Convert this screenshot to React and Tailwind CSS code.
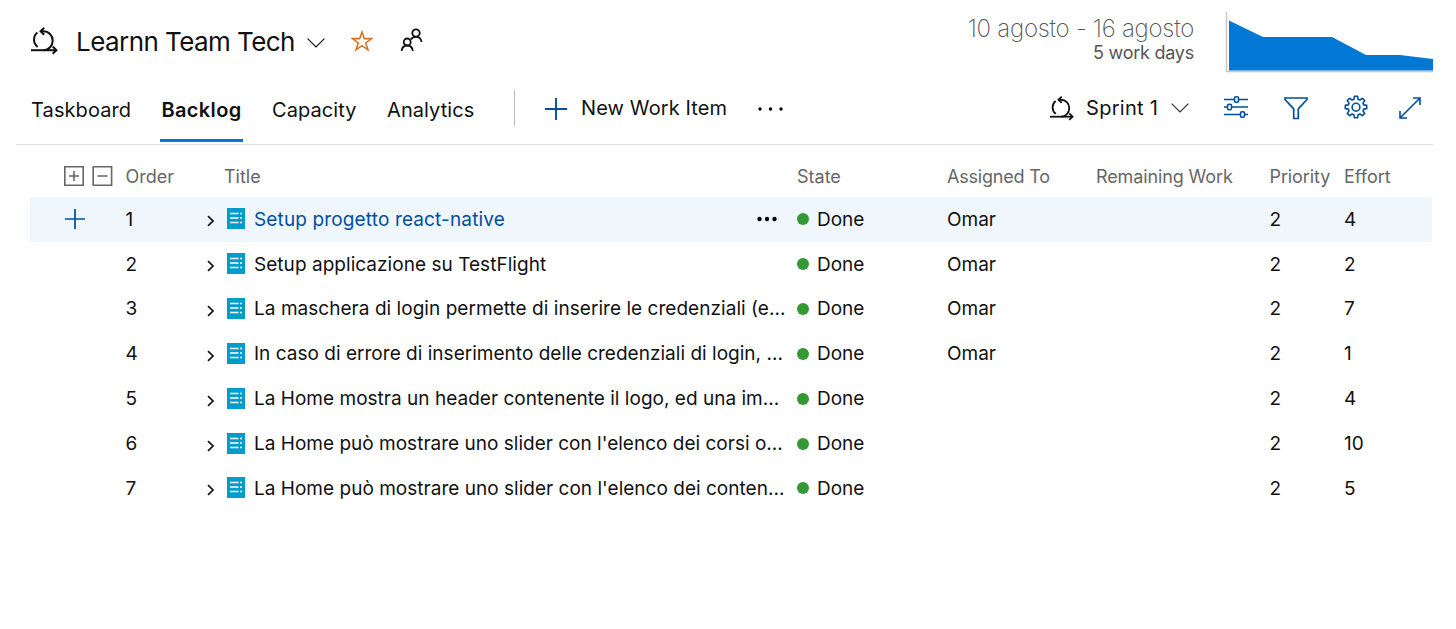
import React from 'react';

const workItems = [
  { order: 1, title: 'Setup progetto react-native', spacing: 'tracking-[0.14px]', assignedTo: 'Omar', priority: 2, effort: 4 },
  { order: 2, title: 'Setup applicazione su TestFlight', spacing: 'tracking-[0.04px]', assignedTo: 'Omar', priority: 2, effort: 2 },
  { order: 3, title: 'La maschera di login permette di inserire le credenziali (e...', spacing: 'tracking-[0.04px]', assignedTo: 'Omar', priority: 2, effort: 7 },
  { order: 4, title: 'In caso di errore di inserimento delle credenziali di login, ...', spacing: 'tracking-[0.02px]', assignedTo: 'Omar', priority: 2, effort: 1 },
  { order: 5, title: 'La Home mostra un header contenente il logo, ed una im...', spacing: 'tracking-[0.02px]', assignedTo: '', priority: 2, effort: 4 },
  { order: 6, title: "La Home può mostrare uno slider con l'elenco dei corsi o...", spacing: 'tracking-[0.01px]', assignedTo: '', priority: 2, effort: 10 },
  { order: 7, title: "La Home può mostrare uno slider con l'elenco dei conten...", spacing: 'tracking-[0.02px]', assignedTo: '', priority: 2, effort: 5 }
];

// Both the header and the rows share these columns
const columns = 'grid grid-cols-[95.5px_71.5px_27px_528px_45px_150px_149px_173.5px_74.5px_88px] items-center';

const SprintIcon = ({ className }) => (
  <svg viewBox="0 0 28 28" className={className} fill="none" stroke="currentColor" strokeWidth="2">
    <path d="M7.4 5.6A9.2 9.2 0 0 0 7.6 20" />
    <path d="M11 4.2h2.2c5.5 0 9.5 4.3 9.5 9.3 0 5.2-4 9.7-9 9.7" />
    <path d="M14.2.8l-3.6 3.5 3.6 3.5" />
    <path d="M1 23.2h25" />
    <path d="M22.7 19.5l3.7 3.7-3.7 3.6" />
  </svg>
);

const ChevronDown = ({ className }) => (
  <svg viewBox="0 0 18 10" className={className} fill="none" stroke="currentColor" strokeWidth="1.2">
    <path d="M.6.6L9 9 17.4.6" />
  </svg>
);

const PlusIcon = ({ className }) => (
  <svg viewBox="0 0 22 22" className={className} fill="none" stroke="currentColor" strokeWidth="1.9">
    <path d="M11 0v22M0 11h22" />
  </svg>
);

const BacklogItemIcon = () => (
  <svg viewBox="0 0 18 21" className="mt-[-2px] h-[21px] w-[18px] shrink-0">
    <path fill="#009ccc" d="M0 0h18v21H0z" />
    <path stroke="#fff" strokeWidth="1.5" d="M3 5.5h8.5M3 10h8.5M3 14.5h8.5M13 5.5h2M13 10h2M13 14.5h2" />
  </svg>
);

const Header = () => (
  <header className="flex h-[80px] pl-[30px]">
    <div className="flex h-[82px] flex-1 items-center text-[#111]">
      <SprintIcon className="mt-[-1px] h-[28px] w-[28px]" />
      <h1 className="ml-[18px] mt-[2px] w-[219px] whitespace-nowrap text-[26px] leading-8 tracking-[-0.57px]">Learnn Team Tech</h1>
      <ChevronDown className="ml-[12px] mt-[4px] h-[10px] w-[18px]" />
      <svg viewBox="0 0 24 24" className="ml-[26px] h-[24px] w-[22px] text-[#d67323]" fill="none" stroke="currentColor" strokeWidth="1.7">
        <path d="M12 2.2l2.5 7.2h8l-6.4 4.7 2.4 7.5-6.5-4.6-6.5 4.6 2.4-7.5-6.4-4.7h8z" />
      </svg>
      <svg viewBox="0 0 24 24" className="ml-[27px] mt-[-2px] h-[24px] w-[24px]" fill="none" stroke="currentColor" strokeWidth="1.8">
        <circle cx="16" cy="5" r="3.7" />
        <circle cx="7.2" cy="14" r="3.5" />
        <path d="M1.6 23c.4-3.4 2.6-5.5 5.6-5.5s5.2 2.1 5.6 5.5" />
        <path d="M10.9 11.5c.9-1.7 2.8-2.7 5.1-2.7 3.3 0 5.2 2 5.5 5.2" />
      </svg>
    </div>
    <div className="flex flex-col items-end pt-[15px]">
      <p className="text-[24px] font-extralight leading-[28px] tracking-[-0.26px] text-[#555]">10 agosto - 16 agosto</p>
      <p className="text-[18px] leading-[20px] tracking-[-0.24px] text-[#555]">5 work days</p>
    </div>
    <svg viewBox="0 0 208 62" className="ml-[31px] mr-[23px] mt-[11px] h-[62px] w-[208px]">
      <path d="M1.5 1v59.5H208" fill="none" stroke="#c8c8c8" strokeWidth="1.5" />
      <path fill="#0078d4" d="M4 9.5L38 26h69l34 18h34l33 4v11.5H4z" />
    </svg>
  </header>
);

const Toolbar = () => (
  <nav className="ml-[16px] mr-[23px] flex h-[65px] border-b border-[#dedede] pl-[15px] text-[20px] text-[#111]">
    <div className="flex h-[62px] leading-[60px]">
      <a className="w-[129px] whitespace-nowrap tracking-[0.1px]">Taskboard</a>
      <a className="mr-[29px] w-[83px] whitespace-nowrap border-b-[3px] border-[#0078d4] text-center font-semibold tracking-[0.35px]">Backlog</a>
      <a className="w-[115px] whitespace-nowrap tracking-[0.08px]">Capacity</a>
      <a className="w-[127px] whitespace-nowrap tracking-[0.08px]">Analytics</a>
    </div>
    <div className="mt-[10px] h-[36px] w-px bg-[#b8b8b8]" />
    <button className="ml-[30px] flex h-[56px] items-center whitespace-nowrap tracking-[0.12px]">
      <PlusIcon className="mr-[14px] mt-[2px] h-[22px] w-[22px] text-[#004f9e]" />
      New Work Item
    </button>
    <svg viewBox="0 0 26 4" className="ml-[31px] mt-[27px] h-[4px] w-[26px]">
      <circle cx="2" cy="2" r="1.7" />
      <circle cx="12.5" cy="2" r="1.7" />
      <circle cx="23" cy="2" r="1.7" />
    </svg>
    <div className="ml-auto flex h-[56px] items-center pr-[12px]">
      <SprintIcon className="mr-[12px] h-[25px] w-[25px]" />
      <span className="w-[73px] whitespace-nowrap tracking-[0.3px]">Sprint 1</span>
      <ChevronDown className="ml-[12px] h-[10px] w-[18px] text-[#333]" />
      <div className="ml-[34px] flex items-center text-[#004f9e]">
        <svg viewBox="0 0 26 24" className="mt-[-2px] h-[24px] w-[26px]" fill="none" stroke="currentColor" strokeWidth="1.6">
          <path d="M1 4.5h10.5M15.5 4.5H25M1 12h3.5M8.5 12H25M1 19.5h16.5M21.5 19.5H25" />
          <rect x="11.5" y="1.8" width="4" height="5.4" rx="1.5" />
          <rect x="4.5" y="9.3" width="4" height="5.4" rx="1.5" />
          <rect x="17.5" y="16.8" width="4" height="5.4" rx="1.5" />
        </svg>
        <svg viewBox="0 0 26 24" className="ml-[34px] h-[24px] w-[26px]" fill="none" stroke="currentColor" strokeWidth="1.7">
          <path d="M2 2h22v1.5l-8.7 9.3v9.7h-4.6v-9.7L2 3.5z" />
        </svg>
        <svg viewBox="0 0 26 26" className="ml-[34px] h-[26px] w-[26px]" fill="none" stroke="currentColor" strokeWidth="1.6" strokeLinejoin="round">
          <path d="M11.4 1.3h3.2l.5 3 1.8.7 2.5-1.7 2.3 2.3-1.7 2.5.7 1.8 3 .5v3.2l-3 .5-.7 1.8 1.7 2.5-2.3 2.3-2.5-1.7-1.8.7-.5 3h-3.2l-.5-3-1.8-.7-2.5 1.7-2.3-2.3 1.7-2.5-.7-1.8-3-.5v-3.2l3-.5.7-1.8-1.7-2.5 2.3-2.3 2.5 1.7 1.8-.7z" />
          <circle cx="13" cy="12.2" r="3.9" />
        </svg>
        <svg viewBox="0 0 22 22" className="ml-[30px] h-[22px] w-[22px]" fill="none" stroke="currentColor" strokeWidth="1.6">
          <path d="M1 21L21 1M14 1h7v7M1 14v7h7" />
        </svg>
      </div>
    </div>
  </nav>
);

const WorkItemRow = ({ item, selected }) => (
  <div className={`${columns} h-[44.85px] pt-px ${selected ? 'bg-[#eff6fc]' : ''}`}>
    <div className="pl-[35px]">
      {selected && <PlusIcon className="mt-[-1px] h-[20px] w-[20px] text-[#004f9e]" />}
    </div>
    <span>{item.order}</span>
    <svg viewBox="0 0 10 14" className="ml-[8.5px] mt-[3px] h-[14px] w-[10px]" fill="none" stroke="currentColor" strokeWidth="1.7">
      <path d="M2 2.2L7 7l-5 4.8" />
    </svg>
    <div className="flex items-center whitespace-nowrap pl-[3px]">
      <BacklogItemIcon />
      <span className={`ml-[9px] ${item.spacing} ${selected ? 'text-[#004f9e]' : ''}`}>{item.title}</span>
    </div>
    <div className="pl-[5px]">
      {selected && (
        <svg viewBox="0 0 20 6" className="mt-[-1px] h-[6px] w-[20px]">
          <circle cx="2.5" cy="3" r="2.2" />
          <circle cx="10" cy="3" r="2.2" />
          <circle cx="17.5" cy="3" r="2.2" />
        </svg>
      )}
    </div>
    <div className="flex items-center">
      <span className="mr-[8px] mt-[-1px] h-[12px] w-[12px] rounded-full bg-[#339933]" />
      Done
    </div>
    <span>{item.assignedTo}</span>
    <span />
    <span>{item.priority}</span>
    <span>{item.effort}</span>
  </div>
);

const BacklogTable = () => (
  <main className="ml-[30px] w-[1402px] text-[19px] text-[#111]">
    <div className={`${columns} h-[52px] whitespace-nowrap pt-[10px] text-[18px] text-[#666]`}>
      <svg viewBox="0 0 50 20" className="ml-[34px] h-[20px] w-[50px]" fill="none" stroke="currentColor" strokeWidth="1.6">
        <path d="M.8.8h18.4v18.4H.8zM5 10h10M10 5v10" />
        <path d="M29.2.8h18.4v18.4H29.2zM33.5 10h10" />
      </svg>
      <span>Order</span>
      <span />
      <span>Title</span>
      <span />
      <span>State</span>
      <span className="tracking-[-0.2px]">Assigned To</span>
      <span className="tracking-[-0.12px]">Remaining Work</span>
      <span className="tracking-[-0.1px]">Priority</span>
      <span>Effort</span>
    </div>
    {workItems.map((item, index) => (
      <WorkItemRow key={item.order} item={item} selected={index === 0} />
    ))}
  </main>
);

export default function App() {
  return (
    <div className="h-[629px] w-[1456px] overflow-hidden bg-white font-['Inter','Liberation_Sans',sans-serif]">
      <Header />
      <Toolbar />
      <BacklogTable />
    </div>
  );
}
